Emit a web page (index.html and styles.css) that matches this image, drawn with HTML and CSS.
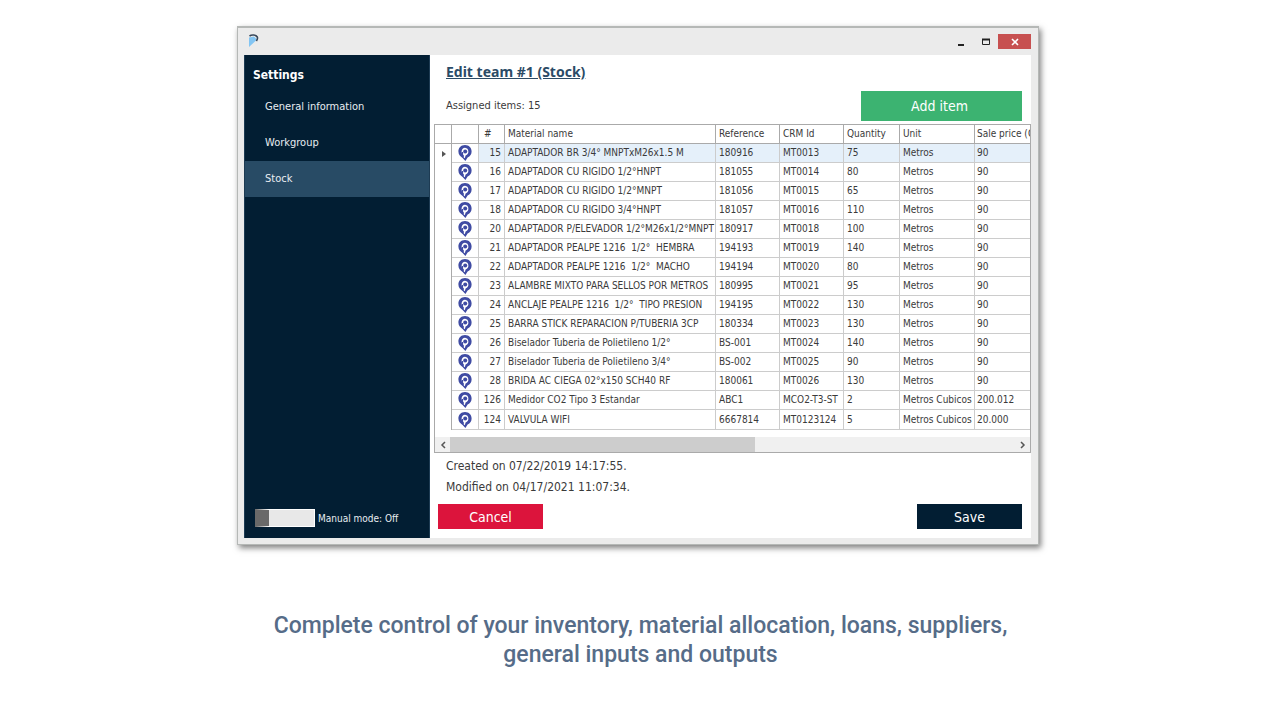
FILE: index.html
```html
<!DOCTYPE html>
<html lang="en">
<head>
<meta charset="utf-8">
<title>Edit team #1 (Stock)</title>
<link rel="stylesheet" href="styles.css">
</head>
<body>
<svg class="defs" aria-hidden="true">
  <symbol id="pin" viewBox="0 0 14 16">
    <path d="M7 0C3 0 .4 2.9 .4 6.5C.4 9.6 2.6 11.6 4.6 13L7.4 16L9.6 12.6C12.2 11.4 13.6 9.2 13.6 6.5C13.6 2.9 11 0 7 0Z" fill="#3f4ba3"/>
    <path d="M7 2.8A3.9 3.9 0 0 1 7.6 10.4L6.8 13.2L5.8 12.4V10.2A3.9 3.9 0 0 1 7 2.8Z" fill="#fff"/>
    <circle cx="7.2" cy="6.6" r="2" fill="#3f4ba3"/>
    <path d="M4.4 7V11.6" fill="none" stroke="#3f4ba3" stroke-width="1.4"/>
  </symbol>
</svg>
<main>
  <div class="stage">
  <section class="window">
    <header class="titlebar">
      <svg class="app-icon" viewBox="0 0 12 16" aria-hidden="true">
        <path d="M1 4.5L6 3.5L9 6.5L1 14Z" fill="#83c5f3"/>
        <path d="M1.5 3C3.5 1.6 8 1.6 9.3 4C9.9 5.4 9.4 6.6 8.4 8" fill="none" stroke="#38475a" stroke-width="1.6"/>
      </svg>
      <div class="window-controls">
        <button class="control" aria-label="Minimize"><svg viewBox="0 0 10 8"><path d="M2 7H8" stroke="#222" stroke-width="2"/></svg></button>
        <button class="control" aria-label="Maximize"><svg viewBox="0 0 10 8"><path d="M1.5 1V6.5H8.5V1" fill="none" stroke="#222"/><path d="M1 1.5H9" stroke="#222" stroke-width="2"/></svg></button>
        <button class="control close" aria-label="Close"><svg viewBox="0 0 10 8"><path d="M2 1L8 7M8 1L2 7" stroke="#fff" stroke-width="1.6"/></svg></button>
      </div>
    </header>
    <div class="body">
      <nav class="sidebar">
        <h2 class="nav-title">Settings</h2>
        <a class="nav-item" href="#general">General information</a>
        <a class="nav-item" href="#workgroup">Workgroup</a>
        <a class="nav-item active" href="#stock">Stock</a>
        <label class="manual"><input class="switch" type="checkbox">Manual mode: Off</label>
      </nav>
      <div class="content">
        <h1 class="heading">Edit team #1 (Stock)</h1>
        <div class="toolbar">
          <p class="count">Assigned items: 15</p>
          <button class="button add">Add item</button>
        </div>
        <div class="grid">
          <div class="viewport">
          <table class="items">
            <colgroup><col class="c-mark"><col class="c-pin"><col class="c-id"><col><col class="c-code"><col class="c-code"><col class="c-quantity"><col class="c-unit"><col class="c-price"></colgroup>
            <thead><tr><th></th><th></th><th class="hash">#</th><th>Material name</th><th>Reference</th><th>CRM Id</th><th>Quantity</th><th>Unit</th><th>Sale price (C</th></tr></thead>
            <tbody>
              <tr class="selected"><td class="mark"><svg viewBox="0 0 4 8"><path d="M0 1L4 4L0 7Z" fill="#555"/></svg></td><td class="pin"><svg><use href="#pin"/></svg></td><td class="id">15</td><td>ADAPTADOR BR 3/4° MNPTxM26x1.5 M</td><td>180916</td><td>MT0013</td><td>75</td><td>Metros</td><td>90</td></tr>
              <tr><td class="mark"></td><td class="pin"><svg><use href="#pin"/></svg></td><td class="id">16</td><td>ADAPTADOR CU RIGIDO 1/2°HNPT</td><td>181055</td><td>MT0014</td><td>80</td><td>Metros</td><td>90</td></tr>
              <tr><td class="mark"></td><td class="pin"><svg><use href="#pin"/></svg></td><td class="id">17</td><td>ADAPTADOR CU RIGIDO 1/2°MNPT</td><td>181056</td><td>MT0015</td><td>65</td><td>Metros</td><td>90</td></tr>
              <tr><td class="mark"></td><td class="pin"><svg><use href="#pin"/></svg></td><td class="id">18</td><td>ADAPTADOR CU RIGIDO 3/4°HNPT</td><td>181057</td><td>MT0016</td><td>110</td><td>Metros</td><td>90</td></tr>
              <tr><td class="mark"></td><td class="pin"><svg><use href="#pin"/></svg></td><td class="id">20</td><td>ADAPTADOR P/ELEVADOR 1/2°M26x1/2°MNPT</td><td>180917</td><td>MT0018</td><td>100</td><td>Metros</td><td>90</td></tr>
              <tr><td class="mark"></td><td class="pin"><svg><use href="#pin"/></svg></td><td class="id">21</td><td>ADAPTADOR PEALPE 1216  1/2°  HEMBRA</td><td>194193</td><td>MT0019</td><td>140</td><td>Metros</td><td>90</td></tr>
              <tr><td class="mark"></td><td class="pin"><svg><use href="#pin"/></svg></td><td class="id">22</td><td>ADAPTADOR PEALPE 1216  1/2°  MACHO</td><td>194194</td><td>MT0020</td><td>80</td><td>Metros</td><td>90</td></tr>
              <tr><td class="mark"></td><td class="pin"><svg><use href="#pin"/></svg></td><td class="id">23</td><td>ALAMBRE MIXTO PARA SELLOS POR METROS</td><td>180995</td><td>MT0021</td><td>95</td><td>Metros</td><td>90</td></tr>
              <tr><td class="mark"></td><td class="pin"><svg><use href="#pin"/></svg></td><td class="id">24</td><td>ANCLAJE PEALPE 1216  1/2°  TIPO PRESION</td><td>194195</td><td>MT0022</td><td>130</td><td>Metros</td><td>90</td></tr>
              <tr><td class="mark"></td><td class="pin"><svg><use href="#pin"/></svg></td><td class="id">25</td><td>BARRA STICK REPARACION P/TUBERIA 3CP</td><td>180334</td><td>MT0023</td><td>130</td><td>Metros</td><td>90</td></tr>
              <tr><td class="mark"></td><td class="pin"><svg><use href="#pin"/></svg></td><td class="id">26</td><td>Biselador Tuberia de Polietileno 1/2°</td><td>BS-001</td><td>MT0024</td><td>140</td><td>Metros</td><td>90</td></tr>
              <tr><td class="mark"></td><td class="pin"><svg><use href="#pin"/></svg></td><td class="id">27</td><td>Biselador Tuberia de Polietileno 3/4°</td><td>BS-002</td><td>MT0025</td><td>90</td><td>Metros</td><td>90</td></tr>
              <tr><td class="mark"></td><td class="pin"><svg><use href="#pin"/></svg></td><td class="id">28</td><td>BRIDA AC CIEGA 02°x150 SCH40 RF</td><td>180061</td><td>MT0026</td><td>130</td><td>Metros</td><td>90</td></tr>
              <tr><td class="mark"></td><td class="pin"><svg><use href="#pin"/></svg></td><td class="id">126</td><td>Medidor CO2 Tipo 3 Estandar</td><td>ABC1</td><td>MCO2-T3-ST</td><td>2</td><td>Metros Cubicos</td><td>200.012</td></tr>
              <tr><td class="mark"></td><td class="pin"><svg><use href="#pin"/></svg></td><td class="id">124</td><td>VALVULA WIFI</td><td>6667814</td><td>MT0123124</td><td>5</td><td>Metros Cubicos</td><td>20.000</td></tr>
            </tbody>
          </table>
          </div>
          <div class="scrollbar">
            <button class="arrow" aria-label="Scroll left"><svg viewBox="0 0 6 8"><path d="M5 1L2 4L5 7" fill="none" stroke="#555" stroke-width="1.5"/></svg></button>
            <div class="track"><div class="thumb"></div></div>
            <button class="arrow" aria-label="Scroll right"><svg viewBox="0 0 6 8"><path d="M1 1L4 4L1 7" fill="none" stroke="#555" stroke-width="1.5"/></svg></button>
          </div>
        </div>
        <div class="stamps">
          <p>Created on 07/22/2019 14:17:55.</p>
          <p>Modified on 04/17/2021 11:07:34.</p>
        </div>
        <footer class="actions">
          <button class="button cancel">Cancel</button>
          <button class="button save">Save</button>
        </footer>
      </div>
    </div>
  </section>
  </div>
  <p class="caption">Complete control of your inventory, material allocation, loans, suppliers,<br>general inputs and outputs</p>
</main>
</body>
</html>
```
FILE: styles.css
```css
* { box-sizing: border-box; }
body {
  margin: 0;
  background: #fff;
  color: #3a3a3a;
  font-family: "DejaVu Sans Condensed", "Noto Sans", sans-serif;
  font-size: 11px;
}
h1, h2, p { margin: 0; }
button { border: 0; padding: 0; font-family: inherit; }
svg { display: block; }
.defs { display: none; }
.stage { padding: 26px 242px 0 237px; }
.window {
  min-width: 720px;
  padding: 0 7px 6px 6px;
  background: #ebebeb;
  border: 1px solid #b5b8b6;
  border-top: 2px solid #b5b8b6;
  box-shadow: 2px 3px 6px rgba(0, 0, 0, .5);
}
.titlebar { display: flex; justify-content: space-between; height: 27px; padding-left: 4px; }
.app-icon { width: 12px; height: 16px; margin-top: 5px; }
.window-controls { display: flex; padding-top: 6px; }
.control { display: grid; place-items: center; width: 25px; height: 15px; background: none; }
.control svg { width: 10px; height: 8px; }
.close { width: 33px; background: #c75050; }
.body { display: flex; background: #fff; }
.sidebar {
  display: flex;
  flex-direction: column;
  width: 186px;
  flex: none;
  padding-top: 9px;
  background: #021e33;
  border: 1px solid #1d3b53;
  border-width: 0 1px;
  color: #e8edf1;
}
.nav-title { height: 25px; padding-left: 8px; font-size: 12px; line-height: 22px; font-weight: 700; color: #fff; }
.nav-item { padding-left: 20px; line-height: 36px; color: inherit; text-decoration: none; }
.active { background: #284b65; }
.manual { display: flex; align-items: center; gap: 3px; margin-top: auto; padding: 0 0 11px 10px; font-size: 10px; }
.switch {
  appearance: none;
  width: 60px;
  height: 18px;
  margin: 0;
  background: #e8e8e8;
  border: 1px solid #fff;
  border-left: 14px solid #696969;
}
.content { flex: 1; min-width: 0; padding: 5px 0 9px 4px; }
.heading { padding-left: 12px; font-family: "Noto Sans", sans-serif; font-size: 14px; line-height: 24px; color: #2b4b66; text-decoration: underline; }
.toolbar { display: flex; justify-content: space-between; align-items: center; padding: 7px 9px 3px 12px; }
.count { padding-bottom: 2px; }
.button { font-size: 14px; color: #fff; }
.add { width: 161px; height: 30px; padding-right: 4px; background: #3cb371; }
.grid { border: 1px solid #aaa; }
.viewport { overflow: hidden; padding-bottom: 7px; }
.items { width: 100%; table-layout: fixed; border-collapse: separate; border-spacing: 0; font-size: 10px; line-height: 12px; }
.c-mark { width: 17px; }
.c-pin { width: 27px; }
.c-id { width: 26px; }
.c-code { width: 64px; }
.c-quantity { width: 56px; }
.c-unit { width: 75px; }
.c-price { width: 55px; }
.items th, .items td {
  height: 19px;
  padding: 0 0 0 3px;
  border-right: 1px solid #ccc;
  border-bottom: 1px solid #ccc;
  text-align: left;
  font-weight: 400;
  white-space: pre;
}
.items th { border-color: #aaa; }
.items th:last-child, .items td:last-child { padding-left: 2px; border-right: 0; }
.items th:last-child { overflow: hidden; }
.items tr:last-child td { height: 20px; }
.items thead tr:last-child th { height: 19px; }
.items .hash { padding-left: 5px; }
.items .mark { padding-left: 7px; border-bottom: 0; border-right-color: #aaa; }
.items .id { padding: 0 3px 0 0; text-align: right; }
.items .pin { padding-left: 6px; }
.mark svg { width: 4px; height: 8px; }
.pin svg { width: 14px; height: 16px; }
.items .selected td { background: #e5f0fa; }
.items .selected .mark, .items .selected .pin { background: #fff; }
.scrollbar { display: flex; height: 15px; background: #f0f0f0; }
.arrow { display: grid; place-items: center; width: 15px; background: none; }
.arrow svg { width: 6px; height: 8px; }
.track { flex: 1; }
.thumb { width: 54%; height: 100%; background: #cdcdcd; }
.stamps { padding: 3px 0 0 12px; font-size: 12px; line-height: 21px; }
.actions { display: flex; justify-content: space-between; padding: 6px 9px 0 4px; }
.actions .button { width: 105px; height: 25px; }
.cancel { background: #dc143c; }
.save { background: #021e33; }
.caption {
  margin-top: 66px;
  color: #566c88;
  font-family: Roboto, sans-serif;
  font-size: 23px;
  font-weight: 500;
  line-height: 29px;
  text-align: center;
}
```
